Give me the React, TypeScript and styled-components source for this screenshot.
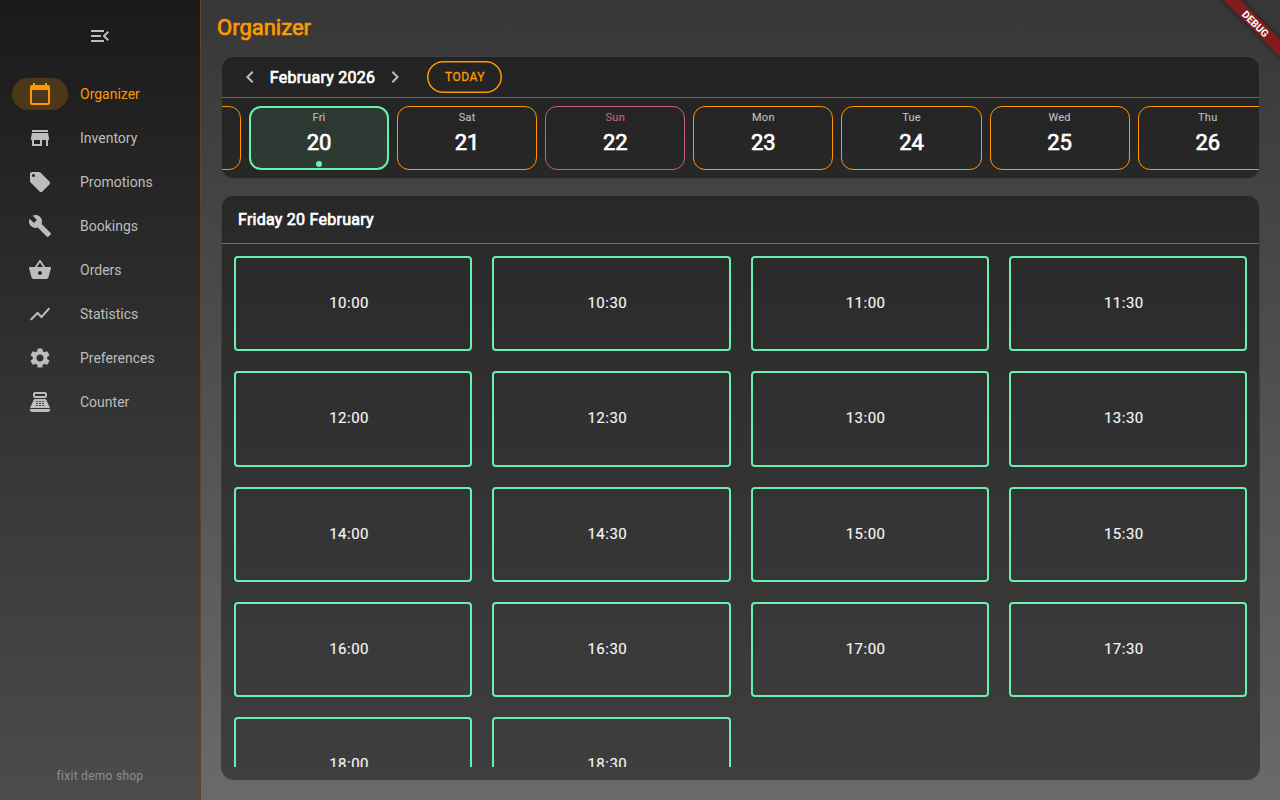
import React from "react";
import styled, { createGlobalStyle, css } from "styled-components";
import type { IconType } from "react-icons";
import {
  MdBuild,
  MdCalendarToday,
  MdChevronLeft,
  MdChevronRight,
  MdLocalOffer,
  MdMenuOpen,
  MdPointOfSale,
  MdSettings,
  MdShoppingBasket,
  MdShowChart,
  MdStore,
} from "react-icons/md";

const accent = "#ff9800";
const mint = "#69f0ae";
const rose = "#c9607a";

const GlobalStyle = createGlobalStyle`
  * { box-sizing: border-box; }
  body {
    margin: 0;
    overflow: hidden;
    font-family: Roboto, "Liberation Sans", sans-serif;
    font-weight: 400;
  }
  button { font: inherit; color: inherit; background: none; border: 0; padding: 0; }
`;

const fauxBold = css`
  -webkit-text-stroke: 0.7px currentColor;
`;

const Shell = styled.div`
  position: relative;
  display: flex;
  width: 1280px;
  height: 800px;
  overflow: hidden;
`;

const Sidebar = styled.aside`
  display: flex;
  flex-direction: column;
  width: 201px;
  flex: none;
  border-right: 1px solid #6a4312;
  background: linear-gradient(#1a1a1a, #4c4c4c);
  color: #bdbdbd;
`;

const CollapseButton = styled.button`
  display: flex;
  justify-content: center;
  align-items: center;
  height: 72px;
  width: 200px;
  font-size: 24px;
`;

const Nav = styled.nav`
  display: flex;
  flex-direction: column;
  flex: 1;
`;

const NavItem = styled.a<{ $active?: boolean }>`
  display: flex;
  align-items: center;
  height: 44px;
  padding-left: 12px;
  gap: 12px;
  font-size: 14px;
  line-height: 20px;
  color: ${(p) => (p.$active ? accent : "inherit")};
`;

const Indicator = styled.span<{ $active?: boolean }>`
  display: flex;
  align-items: center;
  justify-content: center;
  width: 56px;
  height: 32px;
  border-radius: 16px;
  font-size: 24px;
  background: ${(p) => (p.$active ? "rgba(255, 152, 0, 0.2)" : "transparent")};
`;

const ShopName = styled.div`
  height: 32px;
  text-align: center;
  font-size: 12px;
  line-height: 16px;
  letter-spacing: 0.27px;
  color: #8e8e8e;
`;

const Main = styled.main`
  display: flex;
  flex-direction: column;
  flex: 1;
  min-width: 0;
  padding: 0 20px 20px;
  background: linear-gradient(#373737, #6a6a6a);
`;

const Title = styled.h1`
  margin: 0 0 0 -4px;
  height: 56px;
  font-size: 22px;
  font-weight: 400;
  line-height: 56px;
  color: ${accent};
  ${fauxBold}
`;

const Panel = styled.section`
  display: flex;
  flex-direction: column;
  border: 1px solid #3e3e3e;
  border-radius: 12px;
  background: rgba(0, 0, 0, 0.4);
  background-clip: padding-box;
  overflow: hidden;
`;

const CalendarPanel = styled(Panel)`
  height: 123px;
  margin-bottom: 16px;
`;

const SchedulePanel = styled(Panel)`
  flex: 1;
  min-height: 0;
`;

const MonthBar = styled.header`
  display: flex;
  align-items: center;
  height: 41px;
  padding-left: 16px;
  border-bottom: 1px solid #686868;
`;

const MonthButton = styled.button`
  display: flex;
  justify-content: center;
  width: 24px;
  font-size: 24px;
  color: #bdbdbd;
`;

const MonthLabel = styled.div`
  width: 121px;
  text-align: center;
  font-size: 16px;
  letter-spacing: 0.25px;
  white-space: nowrap;
  color: #fff;
  ${fauxBold}
`;

const TodayButton = styled.button`
  width: 75px;
  height: 32px;
  margin-left: 20px;
  padding-left: 1px;
  border-radius: 16px;
  box-shadow: inset 0 0 0 1.5px ${accent};
  font-size: 12px;
  letter-spacing: 0.5px;
  color: ${accent};
  -webkit-text-stroke: 0.3px currentColor;
`;

const DayStrip = styled.div`
  display: flex;
  gap: 8px;
  width: 1185.14px;
  margin: 8px 0 0 -121.2px;
`;

const Day = styled.div<{ $tone: string; $selected?: boolean }>`
  display: flex;
  flex-direction: column;
  align-items: center;
  flex: none;
  width: 140.14px;
  height: 64px;
  padding-top: ${(p) => (p.$selected ? 2 : 3)}px;
  border: ${(p) => (p.$selected ? 2 : 1)}px solid ${(p) => p.$tone};
  border-radius: 12px;
  background: ${(p) => (p.$selected ? "rgba(105, 240, 174, 0.1)" : "transparent")};
`;

const Weekday = styled.span<{ $holiday?: boolean }>`
  font-size: 11px;
  line-height: 16px;
  letter-spacing: 0.25px;
  color: ${(p) => (p.$holiday ? rose : "#bdbdbd")};
  -webkit-text-stroke: 0.15px currentColor;
`;

const DayNumber = styled.span`
  margin-top: 3px;
  font-size: 22px;
  line-height: 28px;
  color: #fff;
  ${fauxBold}
`;

const Dot = styled.span`
  width: 6px;
  height: 6px;
  margin-top: 4px;
  border-radius: 50%;
  background: ${mint};
`;

const DateHeading = styled.h2`
  margin: 0;
  height: 48px;
  flex: none;
  padding-left: 16px;
  border-bottom: 1px solid #6a6a6a;
  font-size: 16px;
  font-weight: 400;
  line-height: 47px;
  letter-spacing: 0.25px;
  color: #fff;
  ${fauxBold}
`;

const SlotViewport = styled.div`
  flex: 1;
  min-height: 0;
  margin: 12px;
  overflow: hidden;
`;

const SlotGrid = styled.div`
  display: grid;
  grid-template-columns: repeat(4, 1fr);
  gap: 20px;
`;

const Slot = styled.div`
  display: flex;
  align-items: center;
  justify-content: center;
  aspect-ratio: 2.5;
  padding: 0 8px 1px 0;
  border: 2px solid ${mint};
  border-radius: 4px;
  font-size: 15px;
  letter-spacing: 0.5px;
  color: #f5f5f5;
  -webkit-text-stroke: 0.15px currentColor;
`;

const DebugBanner = styled.div`
  position: absolute;
  top: 18px;
  right: -28px;
  width: 104px;
  height: 12px;
  transform: rotate(45deg);
  background: #811d1f;
  box-shadow: 0 0 6px rgba(0, 0, 0, 0.5);
  text-align: center;
  font-size: 10.2px;
  font-weight: 700;
  line-height: 13px;
  text-indent: -1px;
  color: #fff;
`;

const navigation: { label: string; icon: IconType }[] = [
  { label: "Organizer", icon: MdCalendarToday },
  { label: "Inventory", icon: MdStore },
  { label: "Promotions", icon: MdLocalOffer },
  { label: "Bookings", icon: MdBuild },
  { label: "Orders", icon: MdShoppingBasket },
  { label: "Statistics", icon: MdShowChart },
  { label: "Preferences", icon: MdSettings },
  { label: "Counter", icon: MdPointOfSale },
];

const days = [
  ["Thu", 19],
  ["Fri", 20],
  ["Sat", 21],
  ["Sun", 22],
  ["Mon", 23],
  ["Tue", 24],
  ["Wed", 25],
  ["Thu", 26],
] as const;

const slots = Array.from({ length: 18 }, (_, i) => `${10 + Math.floor(i / 2)}:${i % 2 ? "30" : "00"}`);

export default function App() {
  return (
    <Shell>
      <GlobalStyle />
      <Sidebar>
        <CollapseButton aria-label="Collapse menu">
          <MdMenuOpen />
        </CollapseButton>
        <Nav>
          {navigation.map(({ label, icon: Icon }, i) => (
            <NavItem key={label} $active={i === 0}>
              <Indicator $active={i === 0}>
                <Icon />
              </Indicator>
              {label}
            </NavItem>
          ))}
        </Nav>
        <ShopName>fixit demo shop</ShopName>
      </Sidebar>
      <Main>
        <Title>Organizer</Title>
        <CalendarPanel>
          <MonthBar>
            <MonthButton aria-label="Previous month">
              <MdChevronLeft />
            </MonthButton>
            <MonthLabel>February 2026</MonthLabel>
            <MonthButton aria-label="Next month">
              <MdChevronRight />
            </MonthButton>
            <TodayButton>TODAY</TodayButton>
          </MonthBar>
          <DayStrip>
            {days.map(([name, date]) => {
              const selected = date === 20;
              const holiday = name === "Sun";
              return (
                <Day key={date} $selected={selected} $tone={selected ? mint : holiday ? rose : accent}>
                  <Weekday $holiday={holiday}>{name}</Weekday>
                  <DayNumber>{date}</DayNumber>
                  {selected && <Dot />}
                </Day>
              );
            })}
          </DayStrip>
        </CalendarPanel>
        <SchedulePanel>
          <DateHeading>Friday 20 February</DateHeading>
          <SlotViewport>
            <SlotGrid>
              {slots.map((time) => (
                <Slot key={time}>{time}</Slot>
              ))}
            </SlotGrid>
          </SlotViewport>
        </SchedulePanel>
      </Main>
      <DebugBanner>DEBUG</DebugBanner>
    </Shell>
  );
}
